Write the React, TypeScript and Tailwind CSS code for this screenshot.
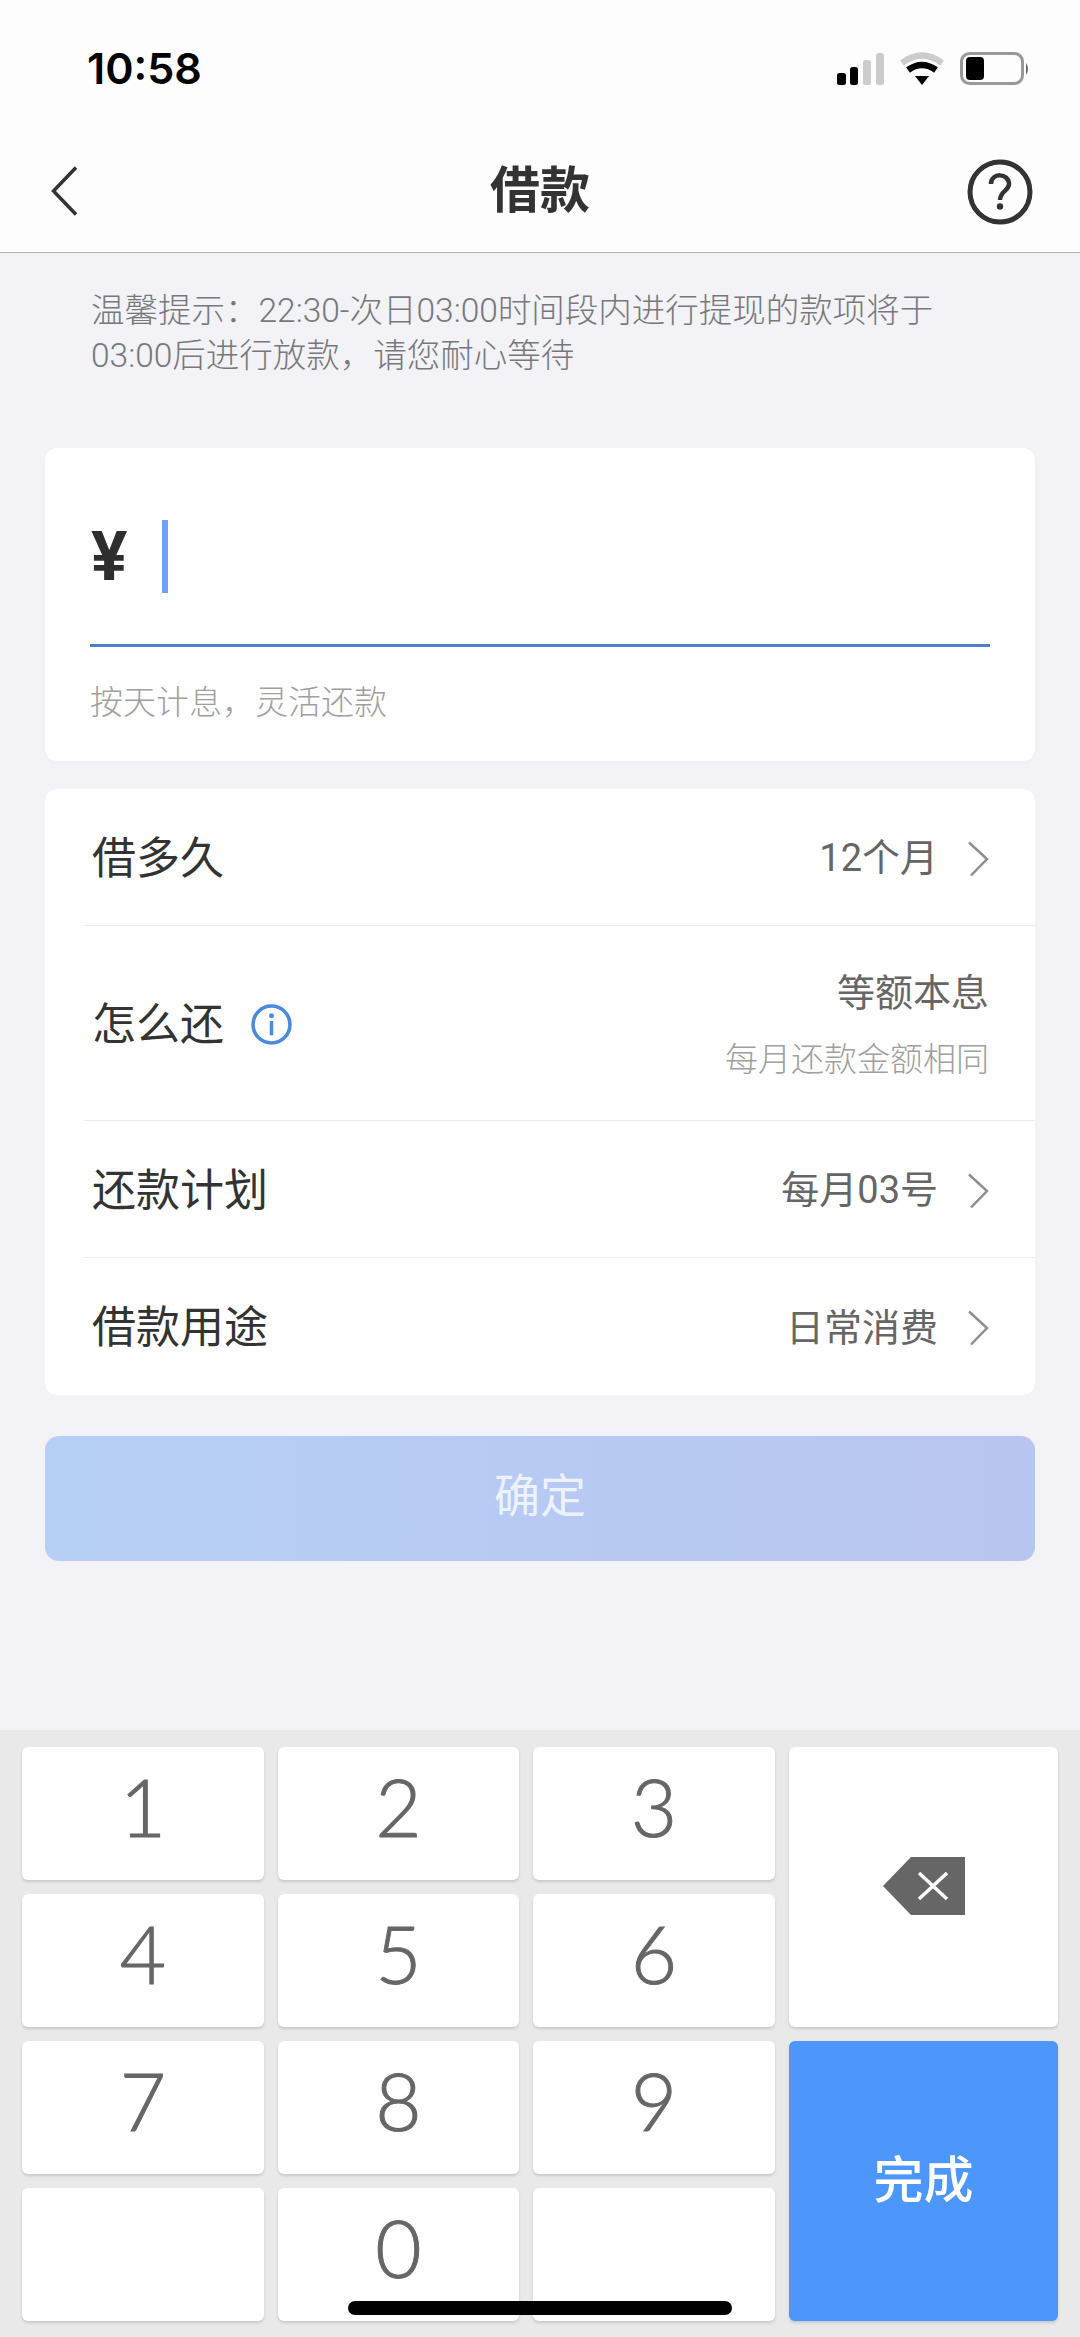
const keys = ["1", "2", "3", "4", "5", "6", "7", "8", "9", "", "0", ""];

function Chevron() {
  return (
    <svg width="22" height="36" viewBox="0 0 22 36" fill="none" className="shrink-0">
      <path d="M2 1.5 L20 18 L4 34.5" stroke="#8e8e8e" strokeWidth="2.5" />
    </svg>
  );
}

function Row({ label, value }: { label: string; value: string }) {
  return (
    <div className="ml-[39px] h-[137px] flex items-center justify-between border-b border-[#ebebef] pl-[8px] pr-[46px] pt-[3px] last:border-b-0">
      <span className="text-[44px] text-[#333333]">{label}</span>
      <div className="flex items-center gap-[29px]">
        <span className="text-[38px] text-[#666666]">{value}</span>
        <Chevron />
      </div>
    </div>
  );
}

export default function App() {
  return (
    <div className="relative w-[1080px] h-[2337px] overflow-hidden flex flex-col bg-[#f2f2f7] font-['Roboto','Noto_Sans_CJK_SC',sans-serif]">
      {/* status bar + nav */}
      <div className="h-[253px] shrink-0 bg-[#fdfdfd] border-b border-[#b4b4b8]">
        <div className="h-[136px] flex items-center justify-between pl-[87px] pr-[50px]">
          <span className="text-[43px] font-semibold text-black font-['Inter',sans-serif]">10:58</span>
          <svg width="193" height="34" viewBox="0 0 193 34" className="mt-[1px]">
            <rect x="0" y="21" width="9" height="12" rx="2.5" fill="#000" />
            <rect x="13" y="15" width="8" height="18" rx="2.5" fill="#000" />
            <rect x="26" y="8" width="8" height="25" rx="2.5" fill="#cccccc" />
            <rect x="39" y="1" width="8" height="32" rx="2.5" fill="#cccccc" />
            <path d="M65 11 Q85 -4 105 11" fill="none" stroke="#cccccc" strokeWidth="6.5" />
            <path d="M71 18 Q85 8 99 18" fill="none" stroke="#000" strokeWidth="6.5" />
            <path d="M78 24 L92 24 L85 33 Z" fill="#000" />
            <rect x="124.5" y="1.5" width="61" height="30" rx="8" fill="none" stroke="#999999" strokeWidth="3" />
            <rect x="129" y="5" width="18" height="23" rx="4" fill="#000" />
            <path d="M189 11 Q193 17 189 23 Z" fill="#666666" />
          </svg>
        </div>
        <div className="relative h-[116px] flex items-center justify-center pb-[6px]">
          <svg width="27" height="50" viewBox="0 0 27 50" fill="none" className="absolute left-[51px] top-[30px]">
            <path d="M25 1.5 L2.5 25 L25 48.5" stroke="#333333" strokeWidth="3.5" />
          </svg>
          <span className="text-[50px] font-bold text-[#333333]">借款</span>
          <svg width="66" height="66" viewBox="0 0 66 66" fill="none" className="absolute right-[47px] top-[23px]">
            <circle cx="33" cy="33" r="30" stroke="#333333" strokeWidth="5" />
            <path d="M24 25 C24 13 42 14 42 25 C42 32 33 32 33 41" stroke="#333333" strokeWidth="4.5" />
            <circle cx="33" cy="47.5" r="3.2" fill="#333333" />
          </svg>
        </div>
      </div>

      <p className="pt-[35px] pl-[91px] pr-[100px] text-[33.5px] leading-[45px] text-[#77787c] font-light">
        温馨提示：22:30-次日03:00时间段内进行提现的款项将于
        <br />
        03:00后进行放款，请您耐心等待
      </p>

      {/* amount card */}
      <div className="mt-[70px] mx-[45px] h-[313px] rounded-[12px] bg-white px-[45px] pt-[72px] shadow-[0_2px_4px_rgba(0,0,0,0.02)]">
        <div className="h-[73px] flex items-center">
          <span className="w-[72px] pl-[1px] text-[68px] font-bold leading-none text-[#2e2e2e]">¥</span>
          <span className="w-[6px] h-[73px] bg-[#6aa5f5]" />
        </div>
        <div className="mt-[51px] h-[3px] bg-[#4f7fd0]" />
        <p className="mt-[33px] text-[33px] leading-[45px] text-[#9f9f9f] font-light">按天计息，灵活还款</p>
      </div>

      {/* options card */}
      <div className="mt-[28px] mx-[45px] rounded-[12px] bg-white">
        <Row label="借多久" value="12个月" />
        <div className="ml-[39px] h-[195px] flex items-center justify-between border-b border-[#ebebef] pl-[8px] pr-[46px]">
          <div className="flex items-center gap-[27px] pt-[3px]">
            <span className="text-[44px] text-[#333333]">怎么还</span>
            <svg width="41" height="41" viewBox="0 0 40 40" fill="none">
              <circle cx="20" cy="20" r="18" stroke="#4a8bdc" strokeWidth="3.5" />
              <circle cx="20" cy="11.5" r="2.4" fill="#4a8bdc" />
              <rect x="18.3" y="16.5" width="3.4" height="14" fill="#4a8bdc" />
            </svg>
          </div>
          <div className="flex flex-col items-end gap-[20px] pt-[6px]">
            <span className="text-[38px] leading-[48px] text-[#666666]">等额本息</span>
            <span className="text-[33px] leading-[46px] text-[#9f9f9f] font-light">每月还款金额相同</span>
          </div>
        </div>
        <Row label="还款计划" value="每月03号" />
        <Row label="借款用途" value="日常消费" />
      </div>

      <div className="mt-[41px] mx-[45px] h-[125px] shrink-0 rounded-[14px] bg-linear-to-r from-[#b6cff7] to-[#b8c5f0] flex items-center justify-center pb-[4px] text-[46px] text-[#edf2fd]">
        确定
      </div>

      {/* keypad */}
      <div className="mt-auto h-[607px] shrink-0 bg-[#e9e9e9] pt-[17px] pl-[22px] grid grid-cols-[242px_241px_242px_269px] grid-rows-[133px_133px_133px_133px] gap-x-[14px] gap-y-[14px]">
        {keys.slice(0, 3).map((k) => (
          <Key key={k} label={k} />
        ))}
        <div className="row-span-2 rounded-[6px] bg-white shadow-[0_2px_3px_rgba(0,0,0,0.14)] flex items-center justify-center pl-[1px] pb-[2px]">
          <svg width="82" height="58" viewBox="0 0 82 58">
            <path d="M28 0 H82 V58 H28 L0 29 Z" fill="#666666" />
            <path d="M36 16 L64 42 M64 16 L36 42" stroke="#ffffff" strokeWidth="3.5" />
          </svg>
        </div>
        {keys.slice(3, 6).map((k) => (
          <Key key={k} label={k} />
        ))}
        {keys.slice(6, 9).map((k) => (
          <Key key={k} label={k} />
        ))}
        <div className="row-span-2 rounded-[6px] bg-[#4d96fb] shadow-[0_2px_3px_rgba(0,0,0,0.14)] flex items-center justify-center text-[50px] font-medium text-white">
          完成
        </div>
        {keys.slice(9).map((k, i) => (
          <Key key={i} label={k} />
        ))}
      </div>

      <div className="absolute left-[348px] top-[2301px] w-[384px] h-[14px] rounded-full bg-black" />
    </div>
  );
}

function Key({ label }: { label: string }) {
  return (
    <div className="rounded-[6px] bg-white shadow-[0_2px_3px_rgba(0,0,0,0.14)] flex items-center justify-center pb-[15px] text-[80px] leading-none font-light text-[#666666] [-webkit-text-stroke:1px_#666666] font-['Lato',sans-serif]">
      {label}
    </div>
  );
}
